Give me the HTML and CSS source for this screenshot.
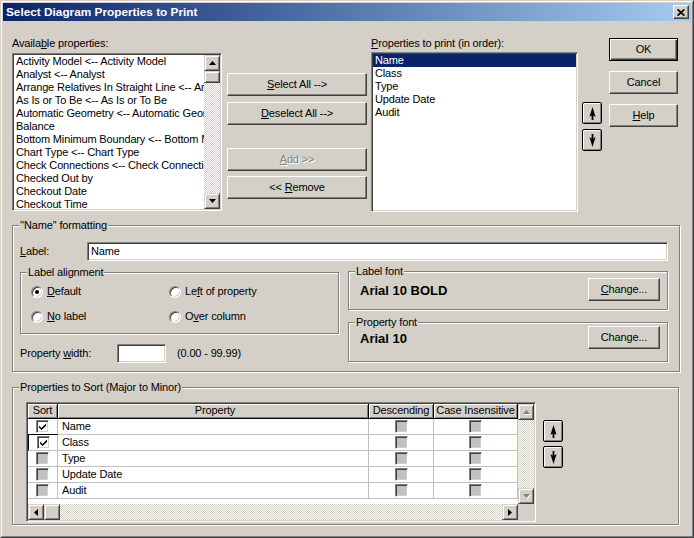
FILE: index.html
```html
<!DOCTYPE html>
<html>
<head>
<meta charset="utf-8">
<title>Select Diagram Properties to Print</title>
<link rel="stylesheet" href="styles.css">
</head>
<body>
<div class="window">
<div class="frame">
  <div class="titlebar">
    <span class="title">Select Diagram Properties to Print</span>
    <span class="close"><svg width="8" height="7" viewBox="0 0 8 7"><path d="M0.6 0.4 L7.4 6.6 M7.4 0.4 L0.6 6.6" stroke="#000" stroke-width="1.7"/></svg></span>
  </div>
  <div class="body">
    <div class="top">
      <div class="col-avail">
        <div class="lbl">Availa<u>b</u>le properties:</div>
        <div class="field listbox avail">
          <div class="items">
            <div class="item">Activity Model &lt;-- Activity Model</div>
            <div class="item">Analyst &lt;-- Analyst</div>
            <div class="item">Arrange Relatives In Straight Line &lt;-- Arrange Relatives In Straight Line</div>
            <div class="item">As Is or To Be &lt;-- As Is or To Be</div>
            <div class="item">Automatic Geometry &lt;-- Automatic Geometry</div>
            <div class="item">Balance</div>
            <div class="item">Bottom Minimum Boundary &lt;-- Bottom Minimum Boundary</div>
            <div class="item">Chart Type &lt;-- Chart Type</div>
            <div class="item">Check Connections &lt;-- Check Connections</div>
            <div class="item">Checked Out by</div>
            <div class="item">Checkout Date</div>
            <div class="item">Checkout Time</div>
          </div>
          <div class="vscroll">
            <div class="sb-btn"><svg width="7" height="4" viewBox="0 0 7 4"><polygon points="3.5,0 7,4 0,4" fill="#000"/></svg></div>
            <div class="sb-btn thumb"></div>
            <div class="track"></div>
            <div class="sb-btn"><svg width="7" height="4" viewBox="0 0 7 4"><polygon points="0,0 7,0 3.5,4" fill="#000"/></svg></div>
          </div>
        </div>
      </div>
      <div class="col-mid">
        <div class="btn"><span><u>S</u>elect All --&gt;</span></div>
        <div class="btn deselect"><span><u>D</u>eselect All --&gt;</span></div>
        <div class="btn add disabled"><span><u>A</u>dd &gt;&gt;</span></div>
        <div class="btn remove"><span>&lt;&lt; <u>R</u>emove</span></div>
      </div>
      <div class="col-print">
        <div class="lbl"><u>P</u>roperties to print (in order):</div>
        <div class="field listbox print">
          <div class="items">
            <div class="item sel">Name</div>
            <div class="item">Class</div>
            <div class="item">Type</div>
            <div class="item">Update Date</div>
            <div class="item">Audit</div>
          </div>
        </div>
      </div>
      <div class="col-arrows">
        <div class="arrowbtn"><svg width="7" height="13" viewBox="0 0 7 13"><path d="M3.5 0 L6.6 10 L4.4 8.4 L4.4 13 L2.6 13 L2.6 8.4 L0.4 10 Z" fill="#000"/></svg></div>
        <div class="arrowbtn down"><svg width="7" height="13" viewBox="0 0 7 13"><path d="M3.5 13 L6.6 3 L4.4 4.6 L4.4 0 L2.6 0 L2.6 4.6 L0.4 3 Z" fill="#000"/></svg></div>
      </div>
      <div class="col-ok">
        <div class="btn default"><span>OK</span></div>
        <div class="btn gap10"><span>Cancel</span></div>
        <div class="btn gap10"><span><u>H</u>elp</span></div>
      </div>
    </div>

    <div class="group fmt">
      <div class="legend">''Name'' formatting</div>
      <div class="label-row">
        <span class="label-lbl"><u>L</u>abel:</span>
        <div class="field input-label"><span>Name</span></div>
      </div>
      <div class="fmt-main">
        <div class="fmt-left">
          <div class="group align">
            <div class="legend">Label alignment</div>
            <div class="radios">
              <div class="ropt"><span class="radio on"></span><span><u>D</u>efault</span></div>
              <div class="ropt"><span class="radio"></span><span>Le<u>f</u>t of property</span></div>
              <div class="ropt"><span class="radio"></span><span><u>N</u>o label</span></div>
              <div class="ropt"><span class="radio"></span><span>O<u>v</u>er column</span></div>
            </div>
          </div>
          <div class="width-row">
            <span class="width-lbl">Property <u>w</u>idth:</span>
            <div class="field input-width"></div>
            <span class="range">(0.00 - 99.99)</span>
          </div>
        </div>
        <div class="fmt-right">
          <div class="group font labelfont">
            <div class="legend">Label font</div>
            <div class="font-row">
              <span class="font-name">Arial 10 BOLD</span>
              <div class="btn change"><span><u>C</u>hange...</span></div>
            </div>
          </div>
          <div class="group font propfont">
            <div class="legend">Property font</div>
            <div class="font-row">
              <span class="font-name">Arial 10</span>
              <div class="btn change"><span>Change...</span></div>
            </div>
          </div>
        </div>
      </div>
    </div>

    <div class="group sort">
      <div class="legend">Properties to Sort (Major to Minor)</div>
      <div class="sort-main">
        <div class="grid">
          <div class="table">
            <div class="trow head">
              <div class="hc c-sort">Sort</div>
              <div class="hc c-prop">Property</div>
              <div class="hc c-desc">Descending</div>
              <div class="hc c-case">Case Insensitive</div>
            </div>
            <div class="trow">
              <div class="tc c-sort"><span class="cb"><svg width="7" height="7" viewBox="0 0 7 7"><path d="M0 2.5 L2.5 5 L7 0.5 L7 3 L2.5 7 L0 4.5 Z" fill="#000"/></svg></span></div>
              <div class="tc c-prop">Name</div>
              <div class="tc c-desc"><span class="cb off"></span></div>
              <div class="tc c-case"><span class="cb off"></span></div>
            </div>
            <div class="trow">
              <div class="tc c-sort current"><span class="cb"><svg width="7" height="7" viewBox="0 0 7 7"><path d="M0 2.5 L2.5 5 L7 0.5 L7 3 L2.5 7 L0 4.5 Z" fill="#000"/></svg></span></div>
              <div class="tc c-prop">Class</div>
              <div class="tc c-desc"><span class="cb off"></span></div>
              <div class="tc c-case"><span class="cb off"></span></div>
            </div>
            <div class="trow">
              <div class="tc c-sort"><span class="cb off"></span></div>
              <div class="tc c-prop">Type</div>
              <div class="tc c-desc"><span class="cb off"></span></div>
              <div class="tc c-case"><span class="cb off"></span></div>
            </div>
            <div class="trow">
              <div class="tc c-sort"><span class="cb off"></span></div>
              <div class="tc c-prop">Update Date</div>
              <div class="tc c-desc"><span class="cb off"></span></div>
              <div class="tc c-case"><span class="cb off"></span></div>
            </div>
            <div class="trow">
              <div class="tc c-sort"><span class="cb off"></span></div>
              <div class="tc c-prop">Audit</div>
              <div class="tc c-desc"><span class="cb off"></span></div>
              <div class="tc c-case"><span class="cb off"></span></div>
            </div>
          </div>
          <div class="vscroll gridv">
            <div class="sb-btn"><svg class="dis" width="7" height="4" viewBox="0 0 7 4"><polygon points="3.5,0 7,4 0,4" fill="#808080"/></svg></div>
            <div class="track"></div>
            <div class="sb-btn"><svg class="dis" width="7" height="4" viewBox="0 0 7 4"><polygon points="0,0 7,0 3.5,4" fill="#808080"/></svg></div>
          </div>
          <div class="hscroll">
            <div class="sb-btn"><svg width="4" height="7" viewBox="0 0 4 7"><polygon points="0,3.5 4,0 4,7" fill="#000"/></svg></div>
            <div class="sb-btn"></div>
            <div class="track"></div>
            <div class="sb-btn"><svg width="4" height="7" viewBox="0 0 4 7"><polygon points="0,0 4,3.5 0,7" fill="#000"/></svg></div>
          </div>
          <div class="corner"></div>
        </div>
        <div class="sort-arrows">
          <div class="arrowbtn"><svg width="7" height="13" viewBox="0 0 7 13"><path d="M3.5 0 L6.6 10 L4.4 8.4 L4.4 13 L2.6 13 L2.6 8.4 L0.4 10 Z" fill="#000"/></svg></div>
          <div class="arrowbtn down2"><svg width="7" height="13" viewBox="0 0 7 13"><path d="M3.5 13 L6.6 3 L4.4 4.6 L4.4 0 L2.6 0 L2.6 4.6 L0.4 3 Z" fill="#000"/></svg></div>
        </div>
      </div>
    </div>
  </div>
</div>
</div>
</body>
</html>
```

FILE: styles.css
```css
* { box-sizing: border-box; }
html, body { margin: 0; padding: 0; }
body {
  width: 694px;
  height: 538px;
  overflow: hidden;
  background: #d4d0c8;
  font-family: "Liberation Sans", Arial, sans-serif;
  font-size: 11px;
  line-height: 13px;
  letter-spacing: -0.15px;
  color: #000;
}
u { text-decoration: underline; text-underline-offset: 1px; }

.window {
  width: 694px;
  height: 538px;
  border: 1px solid;
  border-color: #d4d0c8 #404040 #404040 #d4d0c8;
}
.frame {
  height: 100%;
  border: 1px solid;
  border-color: #fff #808080 #808080 #fff;
  padding: 1px;
}
.titlebar {
  height: 18px;
  display: flex;
  align-items: center;
  justify-content: space-between;
  padding: 0 2px 0 3px;
  background: linear-gradient(to right, #0a246a, #a6caf0);
}
.title { color: #fff; font-weight: bold; font-size: 11.8px; letter-spacing: 0; }
.close {
  width: 16px;
  height: 14px;
  background: #d4d0c8;
  border: 1px solid;
  border-color: #fff #404040 #404040 #fff;
  box-shadow: inset -1px -1px #808080;
  display: flex;
  align-items: center;
  justify-content: center;
}
.body { padding: 16px 0 0 9px; }

/* generic widgets */
.field {
  background: #fff;
  border: 1px solid;
  border-color: #808080 #fff #fff #808080;
  box-shadow: inset 1px 1px #404040, inset -1px -1px #d4d0c8;
  padding: 2px;
}
.btn {
  height: 23px;
  background: #d4d0c8;
  border: 1px solid;
  border-color: #fff #404040 #404040 #fff;
  box-shadow: inset -1px -1px #808080;
  display: flex;
  align-items: center;
  justify-content: center;
  white-space: nowrap;
}
.btn.default {
  border-color: #000;
  box-shadow: inset 1px 1px #fff, inset -1px -1px #404040, inset -2px -2px #808080;
}
.btn.disabled { color: #808080; text-shadow: 1px 1px 0 #fff; }
.arrowbtn {
  width: 20px;
  height: 22px;
  border: 1px solid #000;
  border-radius: 2px;
  background: #d4d0c8;
  box-shadow: inset 1px 1px #fff, inset -1px -1px #808080;
  display: flex;
  align-items: center;
  justify-content: center;
}
.sb-btn {
  width: 16px;
  height: 16px;
  flex: none;
  background: #d4d0c8;
  border: 1px solid;
  border-color: #d4d0c8 #404040 #404040 #d4d0c8;
  box-shadow: inset 1px 1px #fff, inset -1px -1px #808080;
  display: flex;
  align-items: center;
  justify-content: center;
}
.sb-btn .dis { filter: drop-shadow(1px 1px 0 #fff); }
.track {
  flex: 1;
  background: repeating-conic-gradient(#fff 0 25%, #d4d0c8 0 50%) 0 0 / 2px 2px;
}
.vscroll { width: 16px; display: flex; flex-direction: column; }
.hscroll { height: 16px; display: flex; }

/* top area */
.top { display: flex; align-items: flex-start; }
.lbl { height: 13px; white-space: nowrap; }
.col-avail { width: 210px; }
.listbox { padding: 1px; }
.avail { margin-top: 3px; height: 158px; display: flex; }
.avail .items { flex: 1; overflow: hidden; }
.item { height: 13px; padding-left: 2px; white-space: nowrap; overflow: hidden; }
.avail .thumb { height: 12px; }
.col-mid { width: 140px; margin-left: 5px; padding-top: 36px; display: flex; flex-direction: column; }
.deselect { margin-top: 6px; }
.add { margin-top: 23px; }
.remove { margin-top: 5px; }
.col-print { width: 207px; margin-left: 4px; }
.print { margin-top: 2px; height: 160px; }
.item.sel { background: #0a246a; color: #fff; }
.col-arrows { width: 20px; margin-left: 4px; padding-top: 65px; }
.arrowbtn.down { margin-top: 5px; }
.col-ok { width: 69px; margin-left: 7px; padding-top: 1px; display: flex; flex-direction: column; }
.gap10 { margin-top: 10px; }

/* group boxes */
.group {
  border: 1px solid #808080;
  box-shadow: inset 1px 1px #fff, 1px 1px #fff;
}
.legend {
  width: max-content;
  height: 13px;
  margin: -7px 0 -6px 6px;
  padding: 0 1px;
  background: #d4d0c8;
  white-space: nowrap;
}

.fmt { width: 668px; height: 147px; margin-top: 13px; }
.label-row { display: flex; align-items: center; margin: 16px 0 0 7px; height: 19px; }
.label-lbl { width: 67px; }
.input-label { width: 581px; height: 19px; display: flex; align-items: center; padding-left: 3px; }
.fmt-main { display: flex; align-items: flex-start; margin: 10px 0 0 7px; }
.fmt-left { width: 319px; margin-top: 1px; }
.align { height: 62px; }
.radios {
  display: grid;
  grid-template-columns: 138px 138px;
  grid-auto-rows: 25px;
  margin-top: 6px;
  padding-left: 10px;
}
.ropt { display: flex; align-items: center; gap: 4px; white-space: nowrap; }
.radio {
  width: 12px;
  height: 12px;
  flex: none;
  border-radius: 50%;
  background: #fff;
  border: 1px solid;
  border-color: #808080 #fff #fff #808080;
  box-shadow: inset 1px 1px #404040, inset -1px -1px #d4d0c8;
  display: flex;
  align-items: center;
  justify-content: center;
}
.radio.on::after {
  content: "";
  width: 4px;
  height: 4px;
  border-radius: 50%;
  background: #000;
}
.width-row { display: flex; align-items: center; margin-top: 10px; height: 19px; }
.width-lbl { width: 97px; white-space: nowrap; }
.input-width { width: 49px; height: 19px; }
.range { margin-left: 11px; }
.fmt-right { width: 320px; margin-left: 9px; }
.labelfont { height: 39px; }
.propfont { height: 40px; margin-top: 12px; }
.font-row { display: flex; align-items: center; justify-content: space-between; padding: 0 7px 0 11px; }
.labelfont .font-row { margin-top: 6px; }
.propfont .font-row { margin-top: 3px; }
.font-name { font-weight: bold; font-size: 13px; letter-spacing: 0; padding-top: 2px; }
.change { width: 72px; }

/* sort group */
.sort { width: 667px; height: 138px; margin-top: 15px; }
.sort-main { display: flex; align-items: flex-start; margin: 14px 0 0 13px; }
.grid {
  width: 510px;
  height: 120px;
  border: 1px solid;
  border-color: #808080 #fff #fff #808080;
  box-shadow: inset 1px 1px #404040, inset -1px -1px #d4d0c8;
  padding: 1px;
  display: grid;
  grid-template-columns: 490px 16px;
  grid-template-rows: 100px 16px;
}
.table { background: #fff; overflow: hidden; }
.trow { display: flex; height: 16px; }
.trow.head { height: 15px; }
.hc {
  height: 15px;
  background: #d4d0c8;
  border-right: 1px solid #000;
  border-bottom: 1px solid #000;
  box-shadow: inset 1px 1px #fff, inset -1px -1px #808080;
  text-align: center;
  line-height: 13px;
  white-space: nowrap;
  overflow: hidden;
}
.tc {
  height: 16px;
  border-right: 1px solid #c0c0c0;
  border-bottom: 1px solid #c0c0c0;
  display: flex;
  align-items: center;
  white-space: nowrap;
}
.c-sort { width: 30px; justify-content: center; }
.c-prop { width: 311px; padding-left: 4px; }
.c-desc { width: 65px; justify-content: center; }
.c-case { width: 84px; justify-content: center; }
.tc.current { border-top: 1px solid #000; border-left: 1px solid #000; height: 17px; margin-top: -1px; }
.cb {
  width: 13px;
  height: 13px;
  background: #fff;
  border: 1px solid;
  border-color: #808080 #fff #fff #808080;
  box-shadow: inset 1px 1px #404040, inset -1px -1px #d4d0c8;
  display: flex;
  align-items: center;
  justify-content: center;
}
.cb.off { background: #c0c0c0; }
.gridv { height: 100px; }
.hscroll { width: 490px; }
.corner { background: #d4d0c8; }
.sort-arrows { margin: 18px 0 0 7px; }
.arrowbtn.down2 { margin-top: 4px; }
```
